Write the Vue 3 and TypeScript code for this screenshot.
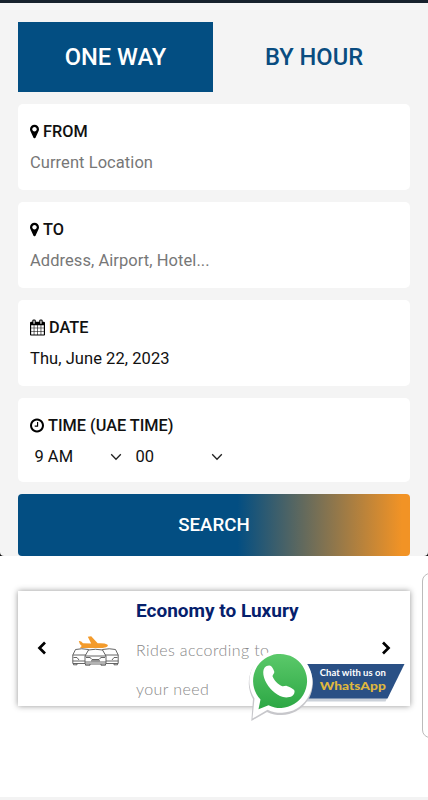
<script setup lang="ts">
interface Field {
  id: string
  icon: 'pin' | 'calendar' | 'clock'
  label: string
  value?: string
  muted?: boolean
}

const icons = {
  pin: {
    box: '0 0 1024 1792',
    path: 'M768 640q0-106-75-181t-181-75-181 75-75 181 75 181 181 75 181-75 75-181zm256 0q0 109-33 179l-364 774q-16 33-47.5 52t-67.5 19-67.5-19-46.5-52l-365-774q-33-70-33-179 0-212 150-362t362-150 362 150 150 362z',
  },
  calendar: {
    box: '64 0 1664 1792',
    path: 'M192 1664h288v-288h-288v288zm352 0h320v-288h-320v288zm-352-352h288v-320h-288v320zm352 0h320v-320h-320v320zm-352-384h288v-288h-288v288zm736 736h320v-288h-320v288zm-384-736h320v-288h-320v288zm768 736h288v-288h-288v288zm-384-352h320v-320h-320v320zm-352-864v-288q0-13-9.5-22.5t-22.5-9.5h-64q-13 0-22.5 9.5t-9.5 22.5v288q0 13 9.5 22.5t22.5 9.5h64q13 0 22.5-9.5t9.5-22.5zm736 864h288v-320h-288v320zm-384-384h320v-288h-320v288zm384 0h288v-288h-288v288zm32-480v-288q0-13-9.5-22.5t-22.5-9.5h-64q-13 0-22.5 9.5t-9.5 22.5v288q0 13 9.5 22.5t22.5 9.5h64q13 0 22.5-9.5t9.5-22.5zm384-64v1280q0 52-38 90t-90 38h-1408q-52 0-90-38t-38-90v-1280q0-52 38-90t90-38h128v-96q0-66 47-113t113-47h64q66 0 113 47t47 113v96h384v-96q0-66 47-113t113-47h64q66 0 113 47t47 113v96h128q52 0 90 38t38 90z',
  },
  clock: {
    box: '128 0 1536 1792',
    path: 'M1024 544v448q0 14-9 23t-23 9h-320q-14 0-23-9t-9-23v-64q0-14 9-23t23-9h224v-352q0-14 9-23t23-9h64q14 0 23 9t9 23zm416 352q0-148-73-273t-198-198-273-73-273 73-198 198-73 273 73 273 198 198 273 73 273-73 198-198 73-273zm224 0q0 209-103 385.5t-279.5 279.5-385.5 103-385.5-103-279.5-279.5-103-385.5 103-385.5 279.5-279.5 385.5-103 385.5 103 279.5 279.5 103 385.5z',
  },
}

const fields: Field[] = [
  { id: 'from', icon: 'pin', label: 'FROM', value: 'Current Location', muted: true },
  { id: 'to', icon: 'pin', label: 'TO', value: 'Address, Airport, Hotel...', muted: true },
  { id: 'date', icon: 'calendar', label: 'DATE', value: 'Thu, June 22, 2023' },
  { id: 'time', icon: 'clock', label: 'TIME (UAE TIME)' },
]
const times: string[] = ['9 AM', '00']
</script>

<template>
  <main class="page">
    <div class="backdrop">
      <section class="booking">
        <nav class="tabs">
          <button class="tab active">ONE WAY</button>
          <button class="tab">BY HOUR</button>
        </nav>
        <div v-for="f in fields" :key="f.id" class="field" :class="f.id">
          <div class="label">
            <svg :class="f.icon" :viewBox="icons[f.icon].box"><path :d="icons[f.icon].path" /></svg>
            <span>{{ f.label }}</span>
          </div>
          <div v-if="f.value" class="value" :class="{ muted: f.muted }">{{ f.value }}</div>
          <div v-else class="selects">
            <div v-for="t in times" :key="t" class="select">
              <span>{{ t }}</span>
              <svg viewBox="0 0 12 8"><path d="M1.2 1.3 6 6.200l4.800-4.900" /></svg>
            </div>
          </div>
        </div>
        <button class="search">SEARCH</button>
      </section>
    </div>

    <div class="carousel">
      <article class="slide">
        <svg class="arrow" viewBox="0 0 10 14"><path d="M8 1.500 2.500 7 8 12.500" /></svg>
        <svg class="fleet" viewBox="0 0 48 32">
          <g class="car">
            <path d="M.8 19 3.500 13.500q6-1.500 13 0l2 5v9H.8ZM.8 19h17M1.500 21.500h3.500l2 2.500M.8 25h16M1.500 27.500v1.300H5v-1.300" />
            <path d="M46.200 19 43.500 13.500q-6-1.500-13 0l-2 5v9h17.700ZM46.200 19h-17M45.500 21.500H42l-2 2.500M46.200 25h-16M45.500 27.500v1.300H42v-1.300" />
            <path class="front" d="m13 20 3.500-6q7-1.500 14 0l3.500 6v8H13ZM13 20h21M14 21.500h4l2 2h7l2-2h4M13 26h21M19 24.800h9M13.500 28v1.200H18V28M29 28v1.200h4.500V28" />
          </g>
          <path class="plane" d="M6.800 5q2.200-.3 4.200 2.200l8.200.3L15.800.8 19.200.3l6.500 7q7-.5 9.500 1.300 1.800 1.700-1.200 2.600-3.500 1-8 .9H8l1.700-2.200Q7.500 8.500 6.800 5Z" />
        </svg>
        <div class="copy">
          <h2>Economy to Luxury</h2>
          <p>Rides according to<br />your need</p>
        </div>
        <svg class="arrow next" viewBox="0 0 10 14"><path d="m2 1.500 5.500 5.500L2 12.500" /></svg>
      </article>
      <div class="peek"></div>
    </div>
    <div class="footer-edge"></div>

    <svg class="whatsapp" viewBox="0 0 162 74">
      <defs>
        <linearGradient id="green" x1="0" y1="0" x2="0" y2="1">
          <stop offset="0" stop-color="#5bc96a" />
          <stop offset="1" stop-color="#2ca744" />
        </linearGradient>
      </defs>
      <path fill="#ccd2da" d="M55 17h103l-16.500 35.500H55Z" />
      <path fill="#2a5085" d="M55 15h105.500L143.500 49.500H55Z" />
      <path class="rim" d="M7.300 72 9 50A32 32 0 1 1 23 63Z" />
      <path fill="#fff" d="M8.500 69.500 10.500 49.500A31.500 31.500 0 1 1 23.500 60.800Z" />
      <path fill="url(#green)" d="M14.500 60.200 16.500 50.500A27 27 0 1 1 24.500 56.300Z" />
      <path fill="#fff" d="M20.500 18.700C22.500 16.500 26 15.900 27.500 17.500c1.300 1.500 2.300 3.600 2.800 5.200.3 1.600-1.900 3-1.800 4.500 1.600 4 5.300 8 9.200 9.900 1.900.8 3.500-.6 5-.2 2.800.8 6 2.600 7.500 4 1 1.700-.1 4.800-2 6.100-3.500 2-8.500 1.800-12.200 0C29 43.500 22.500 36.500 20 28.500c-1-3.500-1.200-7.700.5-9.800Z" />
      <text x="75.800" y="27.200" class="chat" textLength="66" lengthAdjust="spacingAndGlyphs">Chat with us on</text>
      <text x="75.800" y="40.500" class="brand" textLength="66" lengthAdjust="spacingAndGlyphs">WhatsApp</text>
    </svg>
  </main>
</template>

<style>
body { margin: 0; }
</style>

<style scoped>
* { box-sizing: border-box; }
.page {
  position: relative;
  width: 428px;
  height: 800px;
  display: flex;
  flex-direction: column;
  overflow: hidden;
  background: #fff;
  font-family: Roboto, "Liberation Sans", sans-serif;
  color: #111;
}
.backdrop { height: 556px; background: #111; flex: none; }
.booking {
  height: 556px;
  padding: 19px 18px 0;
  border-top: 3px solid #16212c;
  border-radius: 0 0 4px 4px;
  background: #f4f4f4;
  display: flex;
  flex-direction: column;
  gap: 12px;
}
button { border: 0; padding: 0; font-family: inherit; }
.tabs { display: flex; height: 70px; flex: none; }
.tab {
  width: 195px;
  background: transparent;
  color: #094c80;
  font-size: 23.700px;
  font-weight: 500;
  padding-left: 7px;
}
.tab.active { background: #034e82; color: #fff; padding: 0; }
.field {
  height: 86px;
  flex: none;
  padding: 17px 12px 0;
  border-radius: 5px;
  background: #fff;
}
.field.time { height: 84px; }
.label {
  display: flex;
  align-items: center;
  gap: 4px;
  height: 21px;
  font-size: 16.300px;
  font-weight: 500;
}
.label svg { height: 17px; flex: none; }
.pin { width: 9px; }
.calendar { width: 15px; }
.clock { width: 14px; }
.value { margin-top: 10px; line-height: 21px; font-size: 16.500px; letter-spacing: .06px; }
.value.muted { color: #777; }
.selects { display: flex; gap: 14px; margin: 10px 0 0 4.500px; }
.select {
  display: flex;
  align-items: center;
  justify-content: space-between;
  width: 87px;
  height: 21px;
  font-size: 16.500px;
}
.select svg { width: 12px; height: 8px; fill: none; stroke: #222; stroke-width: 1.3; }
.search {
  height: 62px;
  flex: none;
  border-radius: 4px;
  background: linear-gradient(90deg, #034e82 56%, #f29325 98%);
  color: #fff;
  font-size: 18.700px;
  font-weight: 500;
}
.carousel { display: flex; align-items: flex-start; gap: 12px; padding: 17px 0 0 18px; height: 241px; }
.slide {
  display: flex;
  width: 392px;
  height: 115px;
  flex: none;
  margin-top: 18px;
  padding-left: 19px;
  background: #fff;
  box-shadow: 0 0 6px rgba(0, 0, 0, .42);
}
.arrow { width: 10px; height: 14px; margin-top: 50px; fill: none; stroke: #000; stroke-width: 2.700; }
.fleet { width: 48px; height: 32px; margin: 45px 0 0 25px; }
.plane { fill: #f39b2c; }
.car { fill: #fff; stroke: #555; stroke-width: .9; }
.copy { width: 240px; margin-left: 16px; }
h2 { margin: 8px 0 0; font-size: 19px; line-height: 24px; font-weight: 700; color: #05206c; }
p {
  margin: 7px 0 0;
  font-family: Lato, Roboto, sans-serif;
  font-weight: 300;
  font-size: 16px;
  line-height: 39px;
  letter-spacing: .4px;
  color: #888;
}
.next { margin-left: 5px; }
.peek {
  width: 20px;
  height: 165px;
  flex: none;
  border: 1px solid #bbb;
  border-radius: 8px;
}
.footer-edge { height: 3px; background: #f3f3f3; }
.whatsapp { position: absolute; left: 244px; top: 649px; width: 162px; height: 74px; }
.rim { fill: #c7c7cb; }
.chat { font: 700 8.500px Lato, sans-serif; fill: #fff; }
.brand { font: 900 12px Lato, sans-serif; fill: #dfb73e; }
</style>
